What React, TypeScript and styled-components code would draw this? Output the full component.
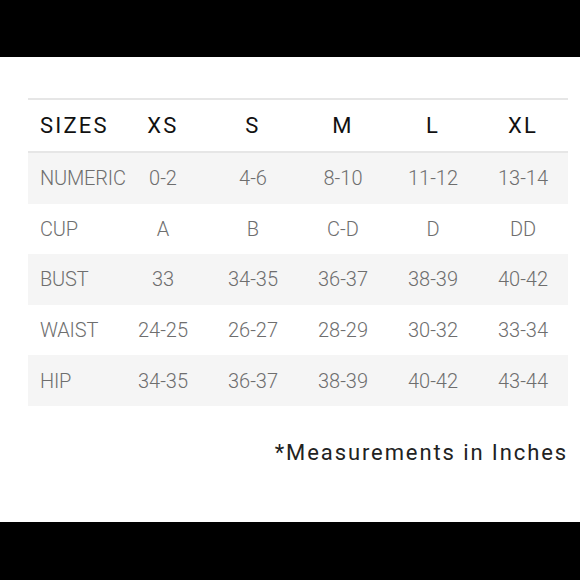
import React from "react";
import styled, { createGlobalStyle } from "styled-components";

const Global = createGlobalStyle`
  html, body { margin: 0; padding: 0; background: #000; }
  body { font-family: Roboto, "Liberation Sans", sans-serif; }
`;

const Page = styled.div`
  width: 580px;
  height: 580px;
  background: #000;
  padding-top: 57px;
  box-sizing: border-box;
`;

const Panel = styled.div`
  height: 465px;
  background: #fff;
  padding: 41px 0 0 28px;
  box-sizing: border-box;
`;

const Table = styled.div`
  width: 540px;
  display: grid;
  grid-template-columns: repeat(6, 90px);
  border-top: 2px solid #e6e6e6;
`;

const Row = styled.div<{ $shaded?: boolean; $head?: boolean }>`
  display: contents;
  & > div {
    background: ${(p) => (p.$shaded ? "#f5f5f5" : "#fff")};
    height: ${(p) => (p.$head ? "53px" : "50.6px")};
    ${(p) => (p.$head ? "border-bottom: 2px solid #e6e6e6;" : "")}
  }
`;

const Cell = styled.div<{ $head?: boolean; $label?: boolean }>`
  display: flex;
  align-items: center;
  justify-content: ${(p) => (p.$label ? "flex-start" : "center")};
  padding-left: ${(p) => (p.$label ? "12px" : "0")};
  box-sizing: border-box;
  font-size: ${(p) => (p.$head ? "22px" : "20px")};
  font-weight: ${(p) => (p.$head ? 400 : 300)};
  letter-spacing: ${(p) => (p.$head ? "2.2px" : p.$label ? "-0.2px" : "0")};
  color: ${(p) => (p.$head ? "#111" : "#6e6e6e")};
  white-space: nowrap;
  ${(p) => (p.$label ? "position: relative; z-index: 1;" : "")}
`;

const Note = styled.div`
  width: 540px;
  margin-top: 34px;
  text-align: right;
  font-size: 22px;
  line-height: 26px;
  letter-spacing: 1.9px;
  color: #222;
  font-weight: 400;
`;

const sizes = ["XS", "S", "M", "L", "XL"];
const rows: [string, string[]][] = [
  ["NUMERIC", ["0-2", "4-6", "8-10", "11-12", "13-14"]],
  ["CUP", ["A", "B", "C-D", "D", "DD"]],
  ["BUST", ["33", "34-35", "36-37", "38-39", "40-42"]],
  ["WAIST", ["24-25", "26-27", "28-29", "30-32", "33-34"]],
  ["HIP", ["34-35", "36-37", "38-39", "40-42", "43-44"]],
];

export default function App() {
  return (
    <>
      <Global />
      <Page>
        <Panel>
          <Table>
            <Row $head>
              <Cell $head $label>SIZES</Cell>
              {sizes.map((s) => (
                <Cell $head key={s}>{s}</Cell>
              ))}
            </Row>
            {rows.map(([label, vals], i) => (
              <Row key={label} $shaded={i % 2 === 0}>
                <Cell $label>{label}</Cell>
                {vals.map((v, j) => (
                  <Cell key={j}>{v}</Cell>
                ))}
              </Row>
            ))}
          </Table>
          <Note>*Measurements in Inches</Note>
        </Panel>
      </Page>
    </>
  );
}
